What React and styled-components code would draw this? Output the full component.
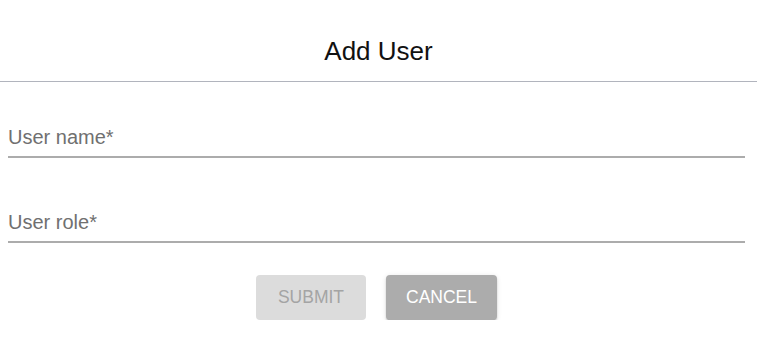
import React from 'react'
import styled, { createGlobalStyle } from "styled-components";

const GlobalStyle = createGlobalStyle`
  body {
    margin: 0;
    background: #fff;
    font-family: "Liberation Sans", Arial, sans-serif;
  }
`;

const Dialog = styled.div`
  width: 757px;
  display: flex;
  flex-direction: column;
`;

const Header = styled.div`
  height: 82px;
  box-sizing: border-box;
  padding-top: 38px;
  border-bottom: 1px solid #b1b4bd;
  display: flex;
  justify-content: center;
  align-items: flex-start;
`;

const Title = styled.h2`
  margin: 0;
  font-size: 26px;
  line-height: 1;
  font-weight: 400;
  color: #111;
`;

const Form = styled.form`
  display: flex;
  flex-direction: column;
  margin: 0 12px 0 8px;
  padding-top: 45px;
`;

const Field = styled.label`
  display: block;
  margin-top: ${({ $gap }) => $gap || 0}px;
  padding-bottom: 9px;
  border-bottom: 2px solid #acacac;
  font-size: 20px;
  line-height: 1;
  color: #707070;
`;

const Actions = styled.div`
  display: flex;
  justify-content: center;
  gap: 20px;
  margin-top: 32px;
`;

const Button = styled.button`
  width: ${({ $w }) => $w}px;
  height: 45px;
  border: none;
  border-radius: 4px;
  font-family: "Liberation Sans", Arial, sans-serif;
  font-size: 17.5px;
  text-transform: uppercase;
  display: flex;
  align-items: center;
  justify-content: center;
  background: ${({ $primary }) => ($primary ? '#acacac' : '#dcdcdc')};
  color: ${({ $primary }) => ($primary ? '#fff' : '#a4a4a4')};
  box-shadow: ${({ $primary }) =>
    $primary
      ? '0 3px 1px -2px rgba(0,0,0,0.2), 0 2px 2px 0 rgba(0,0,0,0.14), 0 1px 5px 0 rgba(0,0,0,0.12)'
      : 'none'};
`;

const App = () => {
  return (
    <>
      <GlobalStyle />
      <Dialog>
        <Header>
          <Title>Add User</Title>
        </Header>
        <Form onSubmit={(e) => e.preventDefault()}>
          <Field>User name*</Field>
          <Field $gap={54}>User role*</Field>
          <Actions>
            <Button type="submit" $w={110} disabled>Submit</Button>
            <Button type="button" $w={111} $primary>Cancel</Button>
          </Actions>
        </Form>
      </Dialog>
    </>
  );
}

export default App
